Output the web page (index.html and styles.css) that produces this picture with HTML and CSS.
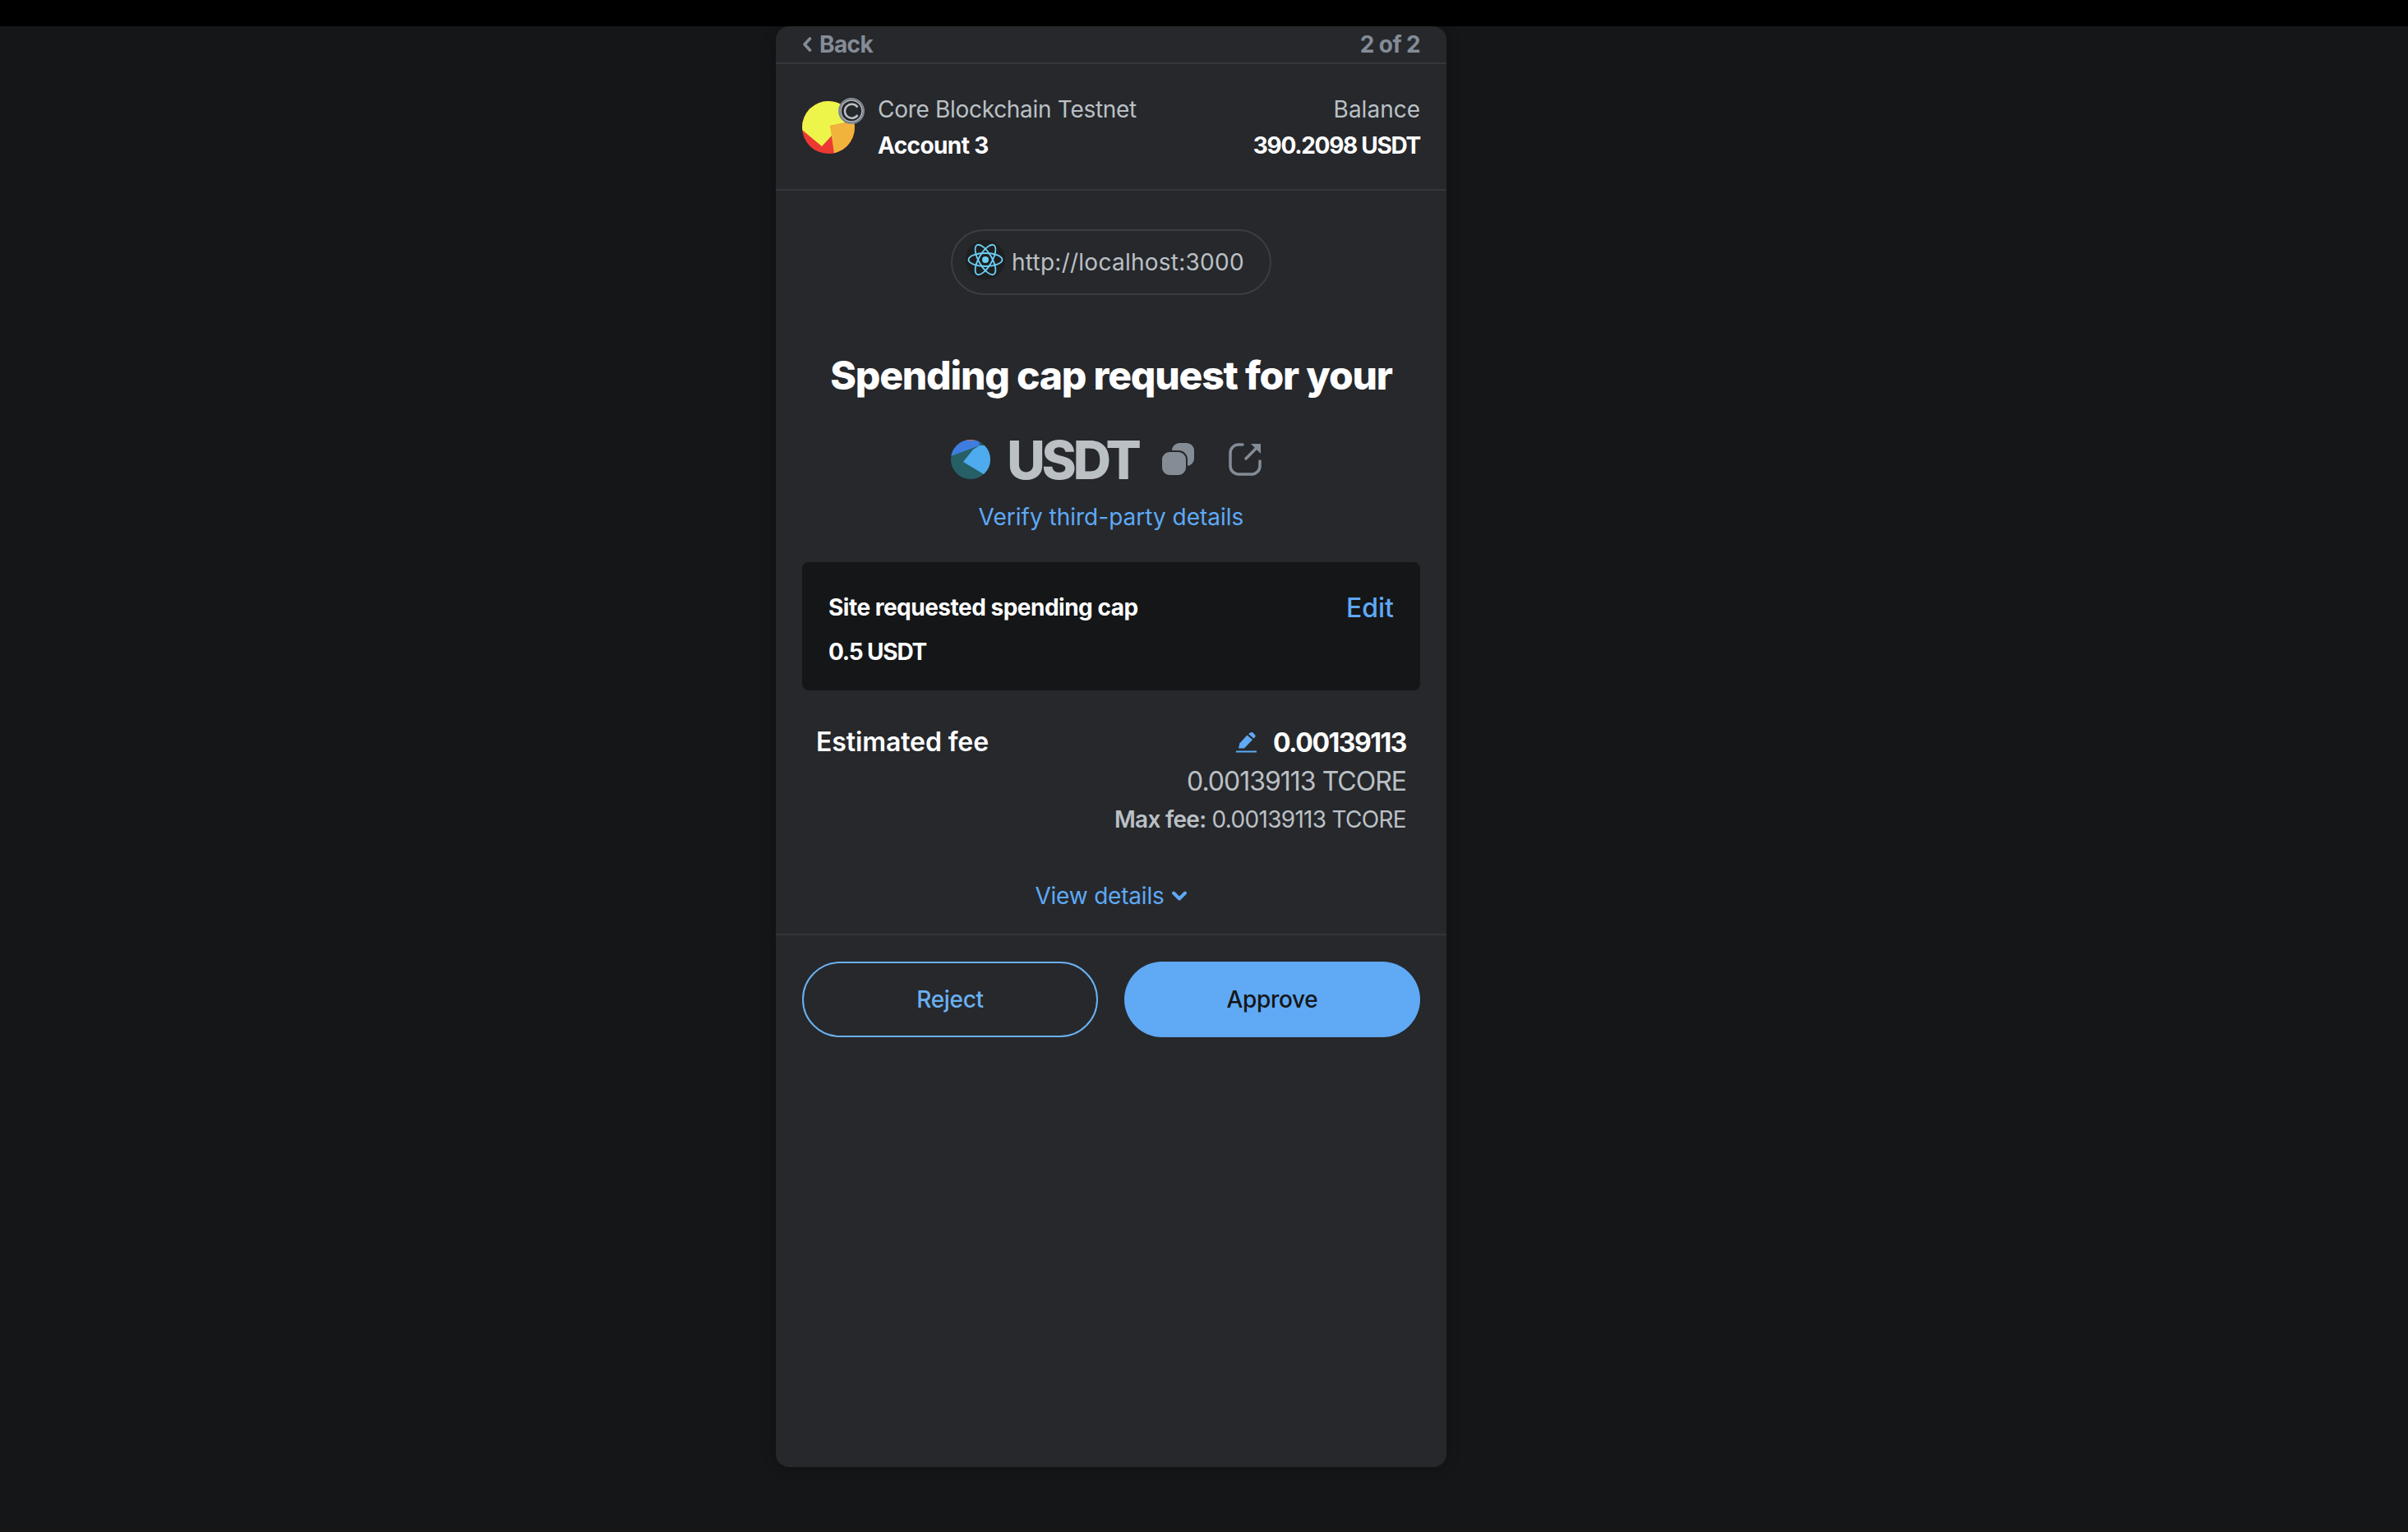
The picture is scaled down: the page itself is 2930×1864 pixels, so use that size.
FILE: index.html
```html
<!DOCTYPE html>
<html lang="en">
<head>
<meta charset="utf-8">
<title>Spending cap request</title>
<link rel="stylesheet" href="styles.css">
</head>
<body>
<div class="topbar"></div>
<main class="stage">
  <section class="card">
    <nav class="nav">
      <a class="back"><svg class="back-chev" viewBox="0 0 12 20"><path d="M9.5 3 3 10l6.500 7" fill="none" stroke="currentColor" stroke-width="3.600" stroke-linecap="round" stroke-linejoin="round"/></svg>Back</a>
      <span class="step">2 of 2</span>
    </nav>
    <header class="account">
      <div class="avatar-group">
        <svg class="avatar" viewBox="0 0 64 64">
          <defs><clipPath id="av"><circle cx="32" cy="32" r="32"/></clipPath></defs>
          <g clip-path="url(#av)">
            <rect width="64" height="64" fill="#EC3A33"/>
            <polygon points="0,0 64,0 64,24 49,27 34,30 37,41 24,55 0,35" fill="#EDF54B"/>
            <polygon points="34,30 49,27 64,27 64,64 39,64" fill="#F2B33D"/>
          </g>
        </svg>
        <svg class="net-badge" viewBox="0 0 32 32">
          <circle cx="16" cy="16" r="15" fill="#26282C" stroke="#848C96" stroke-width="2"/>
          <circle cx="16" cy="16" r="13" fill="none" stroke="#BBC0C5" stroke-width="1.500"/>
          <path d="M23.500 11.500A8.500 8.500 0 1 0 23.500 21" fill="none" stroke="#BBC0C5" stroke-width="2.500"/>
        </svg>
      </div>
      <div class="account-names">
        <span class="network">Core Blockchain Testnet</span>
        <strong class="account-name">Account 3</strong>
      </div>
      <div class="balance">
        <span class="network">Balance</span>
        <strong class="account-name">390.2098 USDT</strong>
      </div>
    </header>
    <div class="content">
      <div class="origin">
        <span class="origin-icon">
          <svg viewBox="0 0 48 48">
            <circle cx="24" cy="24" r="24" fill="#1D1F21"/>
            <g fill="none" stroke="#6CCDF0" stroke-width="1.800">
              <ellipse cx="24" cy="24" rx="20.500" ry="8"/>
              <ellipse cx="24" cy="24" rx="20.500" ry="8" transform="rotate(60 24 24)"/>
              <ellipse cx="24" cy="24" rx="20.500" ry="8" transform="rotate(120 24 24)"/>
            </g>
            <circle cx="24" cy="24" r="4" fill="#6CCDF0"/>
          </svg>
        </span>
        <span class="origin-url">http://localhost:3000</span>
      </div>
      <h1 class="title">Spending cap request for your</h1>
      <div class="token">
        <svg class="token-icon" viewBox="0 0 48 48">
          <defs><clipPath id="tk"><circle cx="24" cy="24" r="24"/></clipPath></defs>
          <g clip-path="url(#tk)">
            <rect width="48" height="48" fill="#275F66"/>
            <polygon points="0,0 34,0 35,7 0,20" fill="#3F7CE0"/>
            <polygon points="15,27 27,12 35,7 48,7 48,40 40,42" fill="#4DABEE"/>
            <rect x="18" width="12" height="1" fill="#D9703A"/>
          </g>
        </svg>
        <span class="token-name">USDT</span>
        <svg class="copy-icon" viewBox="0 0 40 40">
          <rect x="12" y="0" width="27" height="28" rx="9" fill="#848C96"/>
          <rect x="-1" y="10" width="31" height="30" rx="10" fill="#848C96" stroke="#26282C" stroke-width="2"/>
        </svg>
        <svg class="open-icon" viewBox="0 0 40 40">
          <path d="M17 2H12A10 10 0 0 0 2 12V28A10 10 0 0 0 12 38H28A10 10 0 0 0 38 28V22" fill="none" stroke="#848C96" stroke-width="3.500" stroke-linecap="round"/>
          <path d="M21 19 36 4" fill="none" stroke="#848C96" stroke-width="3.500" stroke-linecap="round"/>
          <path d="M27 1H39V13Z" fill="#848C96"/>
        </svg>
      </div>
      <a class="verify">Verify third-party details</a>
      <div class="cap-box">
        <div class="cap-row">
          <strong class="cap-label">Site requested spending cap</strong>
          <a class="cap-edit">Edit</a>
        </div>
        <strong class="cap-label cap-value">0.5 USDT</strong>
      </div>
      <div class="fee">
        <span class="fee-label">Estimated fee</span>
        <div class="fee-values">
          <div class="fee-main">
            <svg class="pencil" viewBox="0 0 25 25">
              <path d="M3 19.500 4.300 13.500 13.500 3.500 20 9 10 19.500Z" fill="#5FA9F5"/>
              <path d="M15 2 17.500 .4a2.200 2.200 0 0 1 3 .2L23 3a2.200 2.200 0 0 1 0 3l-1.500 1.600Z" fill="#5FA9F5"/>
              <rect x="0" y="22.500" width="25" height="2" fill="#5FA9F5"/>
            </svg>
            <strong class="fee-amount">0.00139113</strong>
          </div>
          <span class="fee-sub">0.00139113 TCORE</span>
          <span class="fee-max"><b>Max fee:</b> 0.00139113 TCORE</span>
        </div>
      </div>
      <a class="details">View details<svg class="details-chev" viewBox="0 0 20 14"><path d="M3 3.500 10 10.500 17 3.500" fill="none" stroke="currentColor" stroke-width="4" stroke-linecap="round" stroke-linejoin="round"/></svg></a>
    </div>
    <footer class="actions">
      <button class="btn btn-reject">Reject</button>
      <button class="btn btn-approve">Approve</button>
    </footer>
  </section>
</main>
</body>
</html>
```
FILE: styles.css
```css
* { box-sizing: border-box; }
html, body { margin: 0; height: 100%; }
body {
  background: #141618;
  font-family: "Inter", "Liberation Sans", sans-serif;
  color: #fff;
  overflow: hidden;
}
.topbar { height: 32px; background: #000; }
.stage { padding-left: 944px; }
.card {
  width: 816px;
  height: 1753px;
  background: #26282C;
  border-radius: 16px;
  box-shadow: 0 0 16px rgba(0, 0, 0, .25);
  display: flex;
  flex-direction: column;
}
.nav {
  height: 46px;
  padding: 0 32px;
  border-bottom: 2px solid #33363A;
  display: flex;
  justify-content: space-between;
  align-items: center;
  color: #848C96;
  font-size: 28px;
  font-weight: 700;
  letter-spacing: -.6px;
}
.back { display: flex; align-items: center; gap: 9px; }
.back-chev { width: 12px; height: 20px; }
.account {
  height: 154px;
  padding: 2px 32px 0;
  border-bottom: 2px solid #33363A;
  display: flex;
  align-items: center;
}
.avatar-group { position: relative; width: 64px; height: 64px; margin-right: 28px; }
.avatar { width: 64px; height: 64px; display: block; }
.net-badge { position: absolute; top: -4px; left: 44px; width: 32px; height: 32px; }
.account-names, .balance { display: flex; flex-direction: column; gap: 11px; }
.balance { margin-left: auto; align-items: flex-end; }
.network { font-size: 28px; line-height: 33px; color: #BBC0C5; letter-spacing: -.3px; }
.balance .network { letter-spacing: 0; }
.account-name { font-size: 28px; line-height: 33px; font-weight: 700; letter-spacing: -.6px; }
.balance .account-name { letter-spacing: -1.300px; }
.content { display: flex; flex-direction: column; align-items: center; padding: 47px 32px 0; }
.origin {
  width: 390px;
  height: 80px;
  border: 2px solid #3B3E43;
  border-radius: 40px;
  display: flex;
  align-items: center;
  padding-left: 16px;
  gap: 8px;
}
.origin-icon { width: 48px; height: 48px; margin-bottom: 6px; }
.origin-icon svg { display: block; width: 48px; height: 48px; }
.origin-url { font-size: 28px; color: #BBC0C5; letter-spacing: .25px; }
.title { margin: 69px 0 0; font-size: 48px; line-height: 58px; font-weight: 800; letter-spacing: -1.200px; }
.token { display: flex; align-items: center; height: 64px; margin-top: 41px; padding-right: 12px; }
.token-icon { width: 48px; height: 48px; }
.token-name { font-size: 64px; font-weight: 800; color: #BBC0C5; margin-left: 20px; letter-spacing: -4.200px; }
.copy-icon { width: 40px; height: 40px; margin-left: 29px; }
.open-icon { width: 40px; height: 40px; margin-left: 41px; }
.verify { margin-top: 21px; font-size: 28px; line-height: 34px; color: #5FA9F5; }
.cap-box {
  align-self: stretch;
  margin-top: 38px;
  height: 156px;
  background: #141618;
  border-radius: 8px;
  padding: 37px 32px 0;
}
.cap-row { display: flex; justify-content: space-between; align-items: center; height: 36px; }
.cap-label { display: block; font-size: 28px; line-height: 36px; font-weight: 700; letter-spacing: -.5px; }
.cap-value { margin-top: 18px; letter-spacing: -1.200px; }
.cap-edit { font-size: 32px; font-weight: 500; color: #5FA9F5; }
.fee { align-self: stretch; margin-top: 44px; padding: 0 17px; display: flex; justify-content: space-between; align-items: flex-start; }
.fee-label { font-size: 32px; line-height: 38px; font-weight: 600; letter-spacing: -.1px; }
.fee-values { display: flex; flex-direction: column; align-items: flex-end; }
.fee-main { display: flex; align-items: center; gap: 20px; height: 38px; }
.pencil { width: 25px; height: 25px; }
.fee-amount { font-size: 32px; font-weight: 700; letter-spacing: -1.500px; }
.fee-sub { margin-top: 10px; font-size: 32px; line-height: 38px; color: #BBC0C5; letter-spacing: -1px; }
.fee-max { margin-top: 9px; font-size: 28px; line-height: 36px; color: #BBC0C5; letter-spacing: -.7px; }
.fee-max b { font-weight: 600; }
.details { margin-top: 55px; font-size: 28px; line-height: 40px; color: #5FA9F5; letter-spacing: -.2px; display: flex; align-items: center; gap: 8px; }
.details-chev { width: 20px; height: 14px; }
.actions {
  flex: 1;
  margin-top: 26px;
  border-top: 2px solid #33363A;
  padding: 32px 32px 0;
  display: flex;
  align-items: flex-start;
  gap: 32px;
}
.btn {
  flex: 1;
  height: 92px;
  padding: 0;
  border: 2px solid transparent;
  border-radius: 46px;
  font: 500 28px "Inter", "Liberation Sans", sans-serif;
  letter-spacing: -.3px;
}
.btn-reject { background: transparent; border-color: #6AB0F0; color: #6AB0F0; }
.btn-approve { background: #5FA9F5; color: #141618; }
```
